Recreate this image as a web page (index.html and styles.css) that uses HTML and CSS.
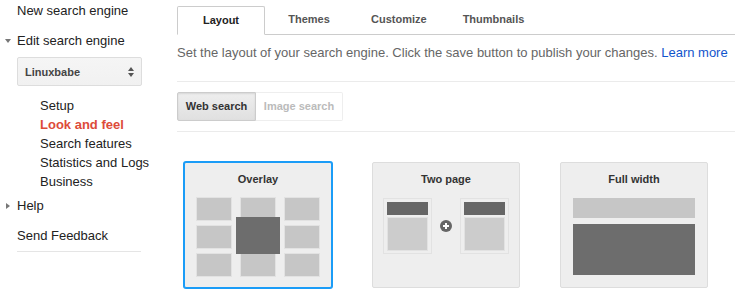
FILE: index.html
```html
<!DOCTYPE html>
<html lang="en">
<head>
  <meta charset="UTF-8" />
  <meta name="viewport" content="width=device-width, initial-scale=1.0"/>
  <title>Look and feel - Custom Search</title>
  <link rel="stylesheet" href="styles.css">
</head>
<body>

  <div class="page">
    <div class="sidebar">
      <div class="nav-item nav-top">New search engine</div>
      <div class="nav-item nav-head"><span class="arrow-down"></span>Edit search engine</div>
      <div class="engine-select">
        <span>Linuxbabe</span>
        <span class="spinner"><span class="up"></span><span class="down"></span></span>
      </div>
      <ul class="sub-nav">
        <li>Setup</li>
        <li class="current">Look and feel</li>
        <li>Search features</li>
        <li>Statistics and Logs</li>
        <li>Business</li>
      </ul>
      <div class="nav-item nav-help"><span class="arrow-right"></span>Help</div>
      <div class="nav-item nav-feedback">Send Feedback</div>
    </div>

    <div class="main">
      <div class="tabs">
        <div class="tab active">Layout</div>
        <div class="tab">Themes</div>
        <div class="tab">Customize</div>
        <div class="tab">Thumbnails</div>
      </div>

      <p class="intro">Set the layout of your search engine. Click the save button to publish your changes. <a href="#">Learn more</a></p>

      <div class="toggle-row">
        <div class="toggle on">Web search</div>
        <div class="toggle off">Image search</div>
      </div>

      <div class="cards">
        <div class="card selected">
          <div class="card-title">Overlay</div>
          <div class="overlay-grid">
            <span></span><span></span><span></span>
            <span></span><span></span><span></span>
            <span></span><span></span><span></span>
            <div class="overlay-box"></div>
          </div>
        </div>

        <div class="card">
          <div class="card-title">Two page</div>
          <div class="two-page">
            <div class="mini-page"><div class="bar"></div><div class="body"></div></div>
            <div class="plus">
              <svg width="12" height="12" viewBox="0 0 12 12">
                <circle cx="6" cy="6" r="6" fill="#666"/>
                <path d="M6 3v6M3 6h6" stroke="#fff" stroke-width="2"/>
              </svg>
            </div>
            <div class="mini-page"><div class="bar"></div><div class="body"></div></div>
          </div>
        </div>

        <div class="card">
          <div class="card-title">Full width</div>
          <div class="full-width">
            <div class="fw-bar"></div>
            <div class="fw-body"></div>
          </div>
        </div>
      </div>
    </div>
  </div>

</body>
</html>
```

FILE: styles.css
```css
body {
  margin: 0;
  background: #fff;
  color: #222;
  font-family: "Liberation Sans", Arial, sans-serif;
  font-size: 13px;
}
.page {
  display: grid;
  grid-template-columns: 177px 1fr;
  height: 295px;
  overflow: hidden;
}

/* sidebar */
.sidebar {
  padding-top: 1px;
}
.nav-item {
  position: relative;
  padding-left: 17px;
  line-height: 20px;
  width: 124px;
}
.nav-head {
  margin-top: 10px;
}
.arrow-down {
  position: absolute;
  left: 5px;
  top: 8px;
  border-left: 3px solid transparent;
  border-right: 3px solid transparent;
  border-top: 4px solid #777;
}
.arrow-right {
  position: absolute;
  left: 6px;
  top: 7px;
  border-top: 3px solid transparent;
  border-bottom: 3px solid transparent;
  border-left: 4px solid #777;
}
.engine-select {
  margin: 6px 0 0 17px;
  width: 125px;
  height: 29px;
  box-sizing: border-box;
  border: 1px solid #ddd;
  border-radius: 2px;
  background: linear-gradient(#f5f5f5, #f1f1f1);
  display: flex;
  align-items: center;
  justify-content: space-between;
  padding: 0 7px 0 7px;
  font-size: 11px;
  font-weight: bold;
  color: #444;
}
.spinner {
  display: flex;
  flex-direction: column;
  gap: 2px;
}
.spinner .up {
  border-left: 3px solid transparent;
  border-right: 3px solid transparent;
  border-bottom: 4px solid #555;
}
.spinner .down {
  border-left: 3px solid transparent;
  border-right: 3px solid transparent;
  border-top: 4px solid #555;
}
.sub-nav {
  list-style: none;
  margin: 10px 0 0 0;
  padding: 0 0 0 40px;
  line-height: 19px;
}
.sub-nav .current {
  color: #dd4b39;
  font-weight: bold;
}
.nav-help {
  margin-top: 5px;
}
.nav-feedback {
  margin: 10px 0 0 17px;
  padding: 0 0 5px 0;
  border-bottom: 1px solid #e5e5e5;
}

/* main */
.main {
  padding-top: 6px;
}
.tabs {
  display: flex;
  border-bottom: 1px solid #ccc;
  height: 28px;
}
.tab {
  box-sizing: border-box;
  min-width: 88px;
  padding: 0 18px;
  text-align: center;
  line-height: 27px;
  font-size: 11px;
  font-weight: bold;
  color: #555;
}
.tab.active {
  color: #222;
  border: 1px solid #ccc;
  border-bottom: 1px solid #fff;
  border-radius: 2px 2px 0 0;
  background: #fff;
  height: 29px;
  line-height: 27px;
}
.intro {
  margin: 10px 0 0 0;
  padding-bottom: 20px;
  border-bottom: 1px solid #ebebeb;
  line-height: 16px;
  color: #666;
}
.intro a {
  color: #15c;
  text-decoration: none;
}
.toggle-row {
  display: flex;
  padding: 10px 0 10px 0;
  border-bottom: 1px solid #ebebeb;
}
.toggle {
  box-sizing: border-box;
  height: 29px;
  line-height: 27px;
  font-size: 11px;
  font-weight: bold;
  text-align: center;
  white-space: nowrap;
}
.toggle.on {
  width: 79px;
  color: #333;
  border: 1px solid #ccc;
  border-radius: 2px 0 0 2px;
  background: linear-gradient(#eee, #e0e0e0);
  box-shadow: inset 0 1px 2px rgba(0,0,0,0.1);
}
.toggle.off {
  width: 87px;
  color: #bbb;
  border: 1px solid #eee;
  border-left: none;
  border-radius: 0 2px 2px 0;
  background: #fff;
}

/* layout cards */
.cards {
  display: flex;
  gap: 40px;
  padding: 30px 0 0 7px;
}
.card {
  box-sizing: border-box;
  width: 148px;
  height: 126px;
  background: #eee;
  border: 1px solid #ddd;
  border-radius: 2px;
}
.card.selected {
  border-color: #1a9cf7;
  box-shadow: 0 0 0 1px #1a9cf7;
}
.card-title {
  text-align: center;
  font-size: 11px;
  font-weight: bold;
  color: #333;
  padding-top: 9px;
  line-height: 14px;
}
.overlay-grid {
  position: relative;
  display: grid;
  grid-template-columns: repeat(3, 34px);
  grid-template-rows: repeat(3, 22px);
  column-gap: 10px;
  row-gap: 6px;
  margin: 12px 0 0 12px;
}
.overlay-grid span {
  background: #c6c6c6;
  box-shadow: 0 0 0 1px #e2e2e2;
}
.overlay-box {
  position: absolute;
  left: 39px;
  top: 19px;
  width: 44px;
  height: 37px;
  background: #6d6d6d;
}
.two-page {
  display: flex;
  align-items: center;
  gap: 8px;
  margin: 12px 0 0 10px;
}
.mini-page {
  box-sizing: border-box;
  width: 49px;
  height: 56px;
  border: 1px solid #e2e2e2;
  padding: 3px 3px 0 3px;
}
.mini-page .bar {
  height: 13px;
  background: #666;
}
.mini-page .body {
  box-sizing: border-box;
  height: 34px;
  margin-top: 2px;
  border: 1px solid #e2e2e2;
  background: #ccc;
}
.plus {
  display: flex;
  width: 12px;
  height: 12px;
}
.full-width {
  margin: 12px 0 0 12px;
  width: 122px;
}
.fw-bar {
  height: 20px;
  background: #c6c6c6;
}
.fw-body {
  height: 51px;
  margin-top: 6px;
  background: #6d6d6d;
}
```
